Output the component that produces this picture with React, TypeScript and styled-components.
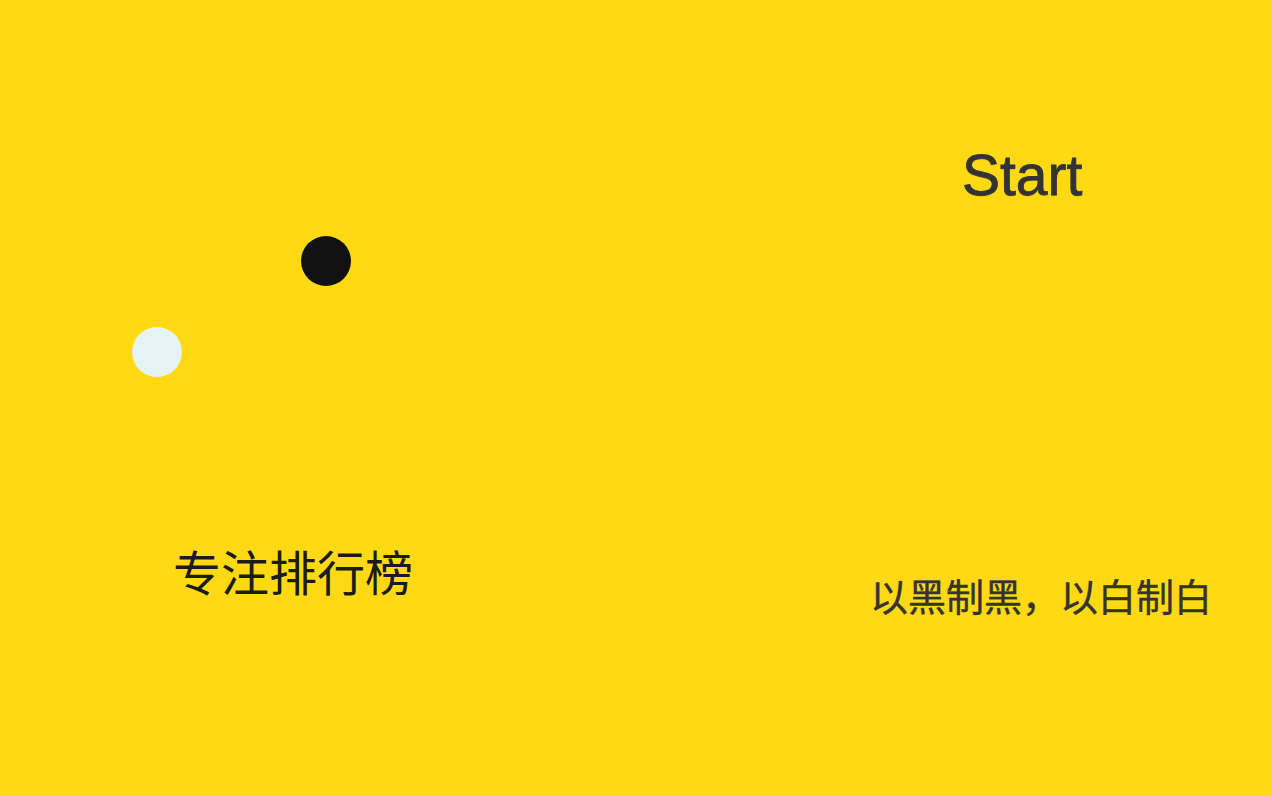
import styled, { createGlobalStyle } from "styled-components"

const GlobalStyle = createGlobalStyle`
  html, body {
    margin: 0;
    padding: 0;
    background: #ffd914;
  }
  body {
    font-family: "Liberation Sans", "Noto Sans CJK SC", sans-serif;
  }
`

const Screen = styled.div`
  width: 100vw;
  height: 100vh;
  overflow: hidden;
  background: #ffd914;
  display: grid;
  grid-template-columns: 636px 1fr;
`

const LeftColumn = styled.div`
  display: flex;
  flex-direction: column;
`

const RightColumn = styled.div`
  display: flex;
  flex-direction: column;
  align-items: flex-start;
`

const Board = styled.div`
  position: relative;
  height: 546px;
`

const Stone = styled.div<{ $white?: boolean; $x: number; $y: number }>`
  position: absolute;
  left: ${(p) => p.$x}px;
  top: ${(p) => p.$y}px;
  width: 50px;
  height: 50px;
  border-radius: 50%;
  background: ${(p) => (p.$white ? "#e7f4f6" : "#111111")};
`

const RankLink = styled.a`
  margin-left: 173px;
  font-family: "Noto Sans CJK SC", sans-serif;
  font-size: 48px;
  line-height: 1;
  color: #1b1b1b;
  text-decoration: none;
  cursor: pointer;
`

const StartButton = styled.button`
  margin: 147px 0 0 326px;
  padding: 0;
  border: none;
  background: none;
  font-family: "Liberation Sans", sans-serif;
  font-size: 57px;
  line-height: 1;
  letter-spacing: 0;
  color: #333333;
  -webkit-text-stroke: 0.8px #333333;
  text-shadow: 0 1px 1px rgba(0, 0, 0, 0.18);
  cursor: pointer;
`

const Motto = styled.div`
  margin: 372px 0 0 234px;
  font-family: "Noto Sans CJK SC", sans-serif;
  font-size: 38px;
  line-height: 1;
  letter-spacing: 0;
  color: #333333;
  -webkit-text-stroke: 0.4px #333333;
  white-space: nowrap;
`

export default function App() {
  return (
    <>
      <GlobalStyle />
      <Screen>
        <LeftColumn>
          <Board>
            <Stone $x={301} $y={236} />
            <Stone $white $x={132} $y={327} />
          </Board>
          <RankLink>专注排行榜</RankLink>
        </LeftColumn>
        <RightColumn>
          <StartButton>Start</StartButton>
          <Motto>以黑制黑，以白制白</Motto>
        </RightColumn>
      </Screen>
    </>
  )
}
